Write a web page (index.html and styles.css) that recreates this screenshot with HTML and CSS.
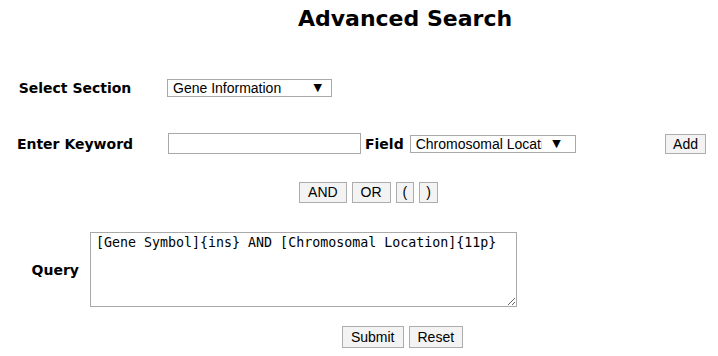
FILE: index.html
```html
<!DOCTYPE html>
<html lang="en">

<head>
    <meta charset="UTF-8">
    <title>Advanced Search</title>
    <link rel="stylesheet" href="styles.css">
</head>

<body>
    <h1 class="titulo">Advanced Search</h1>

    <form class="buscador">
        <div class="fila fila-seccion">
            <label class="etiqueta">Select Section</label>
            <span class="combo combo-seccion">
                <select>
                    <option>Gene Information</option>
                </select>
            </span>
        </div>

        <div class="fila fila-keyword">
            <label class="etiqueta">Enter Keyword</label>
            <input type="text" class="keyword">
            <label class="etiqueta-field">Field</label>
            <span class="combo combo-field">
                <select>
                    <option>Chromosomal Location</option>
                </select>
            </span>
            <button type="button" class="boton boton-add">Add</button>
        </div>

        <div class="operadores">
            <button type="button" class="boton">AND</button>
            <button type="button" class="boton">OR</button>
            <button type="button" class="boton paren">(</button>
            <button type="button" class="boton paren">)</button>
        </div>

        <div class="fila-query">
            <label class="etiqueta-query">Query</label>
            <textarea class="query">[Gene Symbol]{ins} AND [Chromosomal Location]{11p}</textarea>
        </div>

        <div class="acciones">
            <button type="submit" class="boton">Submit</button>
            <button type="reset" class="boton">Reset</button>
        </div>
    </form>
</body>

</html>
```

FILE: styles.css
```css
body {
    margin: 0;
    font-family: "DejaVu Sans", Verdana, sans-serif;
    color: #000;
    background: #fff;
}

.titulo {
    margin: 0;
    padding: 6px 0 0 92px;
    font-size: 22px;
    line-height: 26px;
    text-align: center;
}

.buscador {
    width: 718px;
}

.fila {
    display: flex;
    align-items: center;
}

.etiqueta {
    width: 150px;
    text-align: center;
    font-weight: bold;
    font-size: 14px;
}

.fila-seccion {
    margin-top: 47px;
    height: 18px;
}

.fila-keyword {
    margin-top: 36px;
    height: 21px;
    padding-right: 12px;
}

.combo {
    position: relative;
    display: inline-block;
}

.combo select {
    appearance: none;
    -webkit-appearance: none;
    display: block;
    height: 18px;
    margin: 0;
    border: 1px solid #a9a9a9;
    border-radius: 0;
    background: #fff;
    color: #000;
    font-family: "Liberation Sans", Arial, sans-serif;
    font-size: 14px;
    line-height: 16px;
    padding: 0 22px 0 5px;
}

.combo::after {
    content: "\25BC";
    position: absolute;
    top: 2px;
    font-family: "DejaVu Sans", sans-serif;
    font-size: 11px;
    line-height: 14px;
    pointer-events: none;
}

.combo-seccion {
    margin-left: 17px;
}

.combo-seccion select {
    width: 165px;
}

.combo-seccion::after {
    right: 10px;
}

.combo-field {
    margin-left: 6px;
}

.combo-field select {
    width: 166px;
    padding-right: 33px;
}

.combo-field::after {
    right: 15px;
}

.keyword {
    margin: 0 0 0 18px;
    width: 193px;
    height: 21px;
    box-sizing: border-box;
    border: 1px solid #a9a9a9;
    padding: 0 4px;
}

.etiqueta-field {
    margin-left: 4px;
    font-weight: bold;
    font-size: 14px;
}

.boton {
    height: 21px;
    margin: 0;
    padding: 0 8px;
    border: 1px solid #adadad;
    border-radius: 0;
    background: #f3f3f3;
    color: #000;
    font-family: "Liberation Sans", Arial, sans-serif;
    font-size: 14px;
    line-height: 19px;
}

.boton-add {
    margin-left: auto;
    height: 20px;
    padding: 0 7px;
}

.paren {
    padding: 0 6px;
}

.operadores {
    display: flex;
    justify-content: center;
    gap: 5px;
    margin-top: 28px;
    padding-left: 19px;
}

.fila-query {
    display: flex;
    align-items: center;
    margin-top: 29px;
}

.etiqueta-query {
    width: 79px;
    padding-right: 11px;
    text-align: right;
    font-weight: bold;
    font-size: 14px;
}

.query {
    width: 427px;
    height: 75px;
    box-sizing: border-box;
    margin: 0;
    border: 1px solid #a9a9a9;
    padding: 2px 5px;
    font-family: "DejaVu Sans Mono", Consolas, monospace;
    font-size: 13.3px;
    line-height: 16px;
    color: #000;
}

.acciones {
    display: flex;
    justify-content: center;
    gap: 5px;
    margin-top: 19px;
    padding-left: 87px;
}

.acciones .boton {
    height: 22px;
}
```
